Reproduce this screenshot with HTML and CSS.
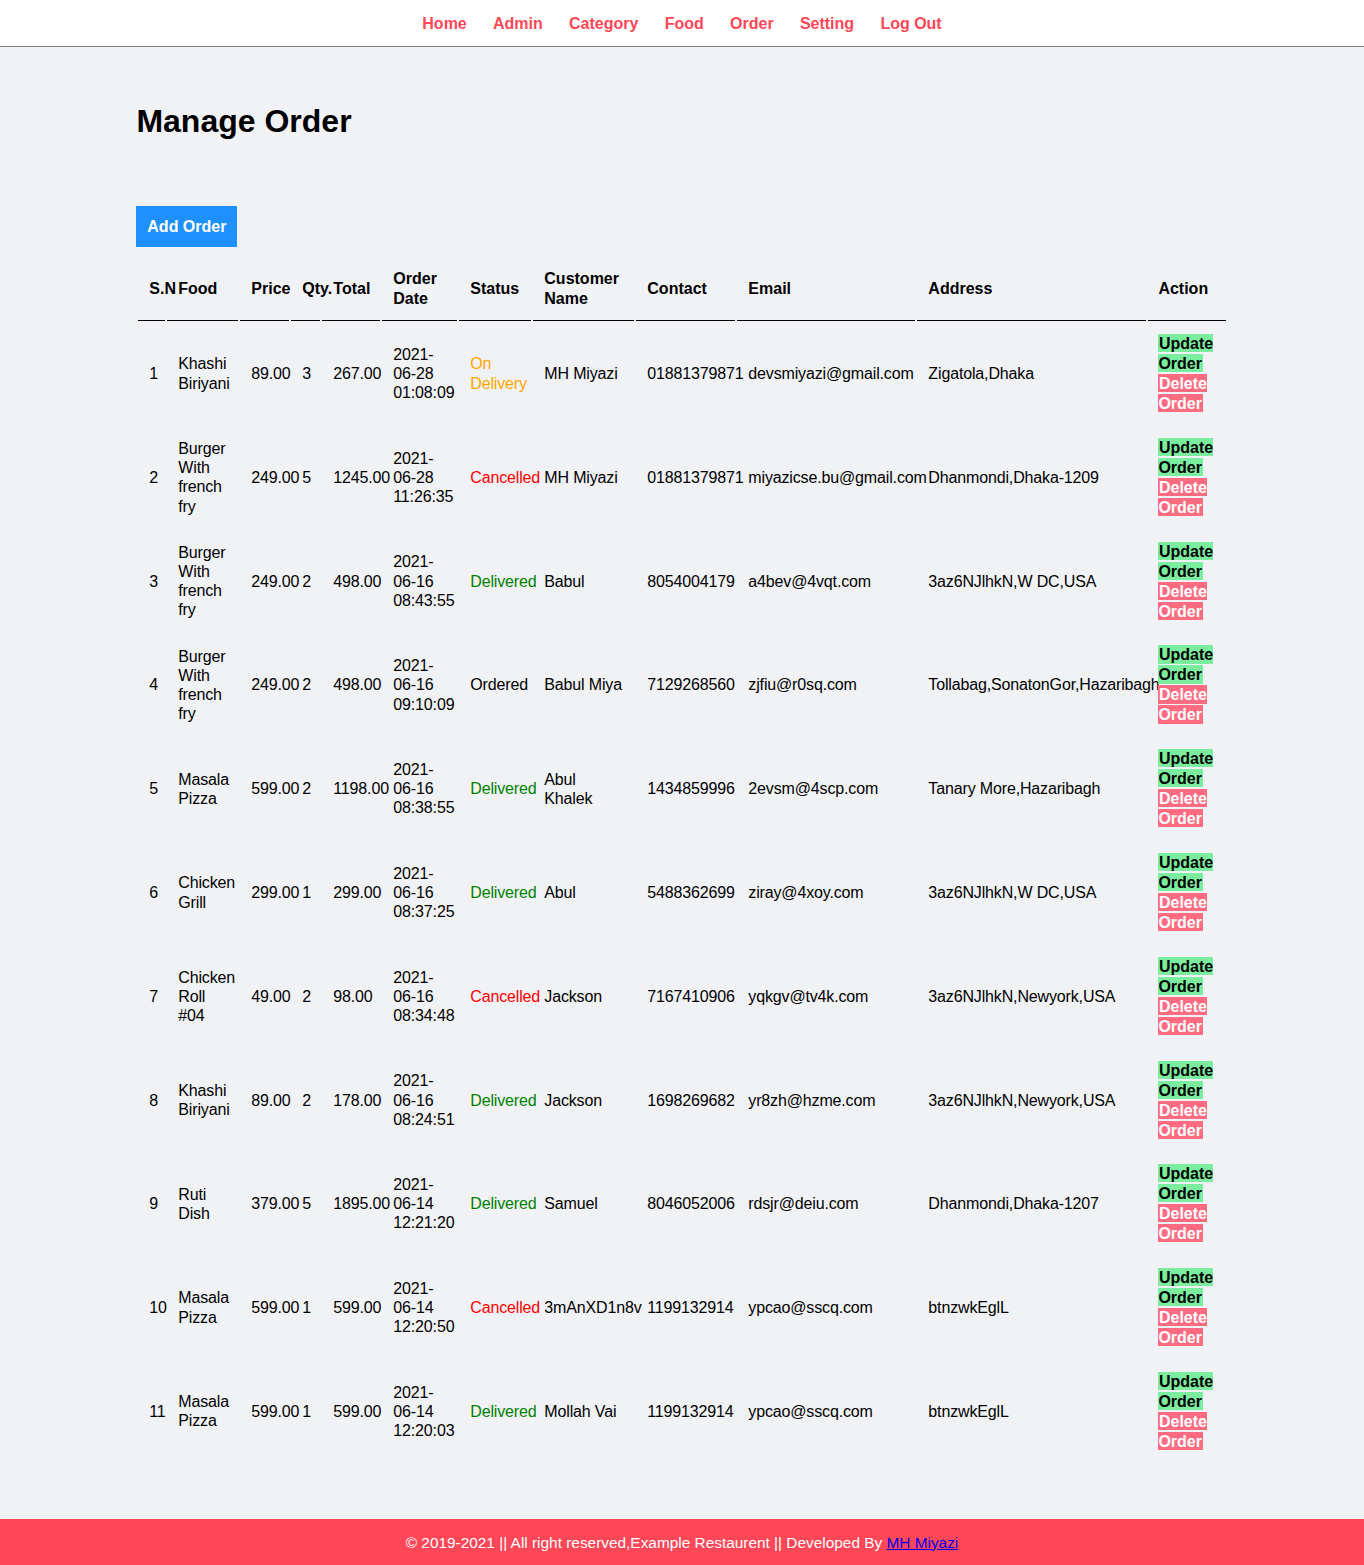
FILE: index.html
```html
<!DOCTYPE html>
<html lang="en">
<head>
<meta charset="utf-8">
<title>Manage Order</title>
<link rel="stylesheet" href="styles.css">
</head>
<body>
<div class="menu text-center">
  <div class="wrapper">
    <ul>
      <li><a href="#">Home</a></li>
      <li><a href="#">Admin</a></li>
      <li><a href="#">Category</a></li>
      <li><a href="#">Food</a></li>
      <li><a href="#">Order</a></li>
      <li><a href="#">Setting</a></li>
      <li><a href="#">Log Out</a></li>
    </ul>
  </div>
</div>

<div class="main-content">
  <div class="wrapper">
    <h1>Manage Order</h1>
    <div class="toolbar"><a href="#" class="btn-primary">Add Order</a></div>
    <table class="tbl-full">
      <colgroup>
        <col class="c-sn"><col class="c-food"><col class="c-price"><col class="c-qty"><col class="c-total"><col class="c-date"><col class="c-status"><col class="c-cust"><col class="c-contact"><col class="c-email"><col class="c-addr"><col class="c-act">
      </colgroup>
      <tr>
        <th>S.N</th><th>Food</th><th>Price</th><th>Qty.</th><th>Total</th><th>Order Date</th><th>Status</th><th>Customer Name</th><th>Contact</th><th>Email</th><th>Address</th><th>Action</th>
      </tr>
      <tr>
        <td>1</td><td>Khashi Biriyani</td><td>89.00</td><td>3</td><td>267.00</td><td>2021-06-28 01:08:09</td><td><span class="st-delivery">On Delivery</span></td><td>MH Miyazi</td><td>01881379871</td><td>devsmiyazi@gmail.com</td><td>Zigatola,Dhaka</td>
        <td class="act"><a href="#" class="btn-secondary">Update Order</a> <a href="#" class="btn-danger">Delete Order</a></td>
      </tr>
      <tr>
        <td>2</td><td>Burger With french fry</td><td>249.00</td><td>5</td><td>1245.00</td><td>2021-06-28 11:26:35</td><td><span class="st-cancelled">Cancelled</span></td><td>MH Miyazi</td><td>01881379871</td><td>miyazicse.bu@gmail.com</td><td>Dhanmondi,Dhaka-1209</td>
        <td class="act"><a href="#" class="btn-secondary">Update Order</a> <a href="#" class="btn-danger">Delete Order</a></td>
      </tr>
      <tr>
        <td>3</td><td>Burger With french fry</td><td>249.00</td><td>2</td><td>498.00</td><td>2021-06-16 08:43:55</td><td><span class="st-delivered">Delivered</span></td><td>Babul</td><td>8054004179</td><td>a4bev@4vqt.com</td><td>3az6NJlhkN,W DC,USA</td>
        <td class="act"><a href="#" class="btn-secondary">Update Order</a> <a href="#" class="btn-danger">Delete Order</a></td>
      </tr>
      <tr>
        <td>4</td><td>Burger With french fry</td><td>249.00</td><td>2</td><td>498.00</td><td>2021-06-16 09:10:09</td><td><span>Ordered</span></td><td>Babul Miya</td><td>7129268560</td><td>zjfiu@r0sq.com</td><td>Tollabag,SonatonGor,Hazaribagh</td>
        <td class="act"><a href="#" class="btn-secondary">Update Order</a> <a href="#" class="btn-danger">Delete Order</a></td>
      </tr>
      <tr>
        <td>5</td><td>Masala Pizza</td><td>599.00</td><td>2</td><td>1198.00</td><td>2021-06-16 08:38:55</td><td><span class="st-delivered">Delivered</span></td><td>Abul Khalek</td><td>1434859996</td><td>2evsm@4scp.com</td><td>Tanary More,Hazaribagh</td>
        <td class="act"><a href="#" class="btn-secondary">Update Order</a> <a href="#" class="btn-danger">Delete Order</a></td>
      </tr>
      <tr>
        <td>6</td><td>Chicken Grill</td><td>299.00</td><td>1</td><td>299.00</td><td>2021-06-16 08:37:25</td><td><span class="st-delivered">Delivered</span></td><td>Abul</td><td>5488362699</td><td>ziray@4xoy.com</td><td>3az6NJlhkN,W DC,USA</td>
        <td class="act"><a href="#" class="btn-secondary">Update Order</a> <a href="#" class="btn-danger">Delete Order</a></td>
      </tr>
      <tr>
        <td>7</td><td>Chicken Roll #04</td><td>49.00</td><td>2</td><td>98.00</td><td>2021-06-16 08:34:48</td><td><span class="st-cancelled">Cancelled</span></td><td>Jackson</td><td>7167410906</td><td>yqkgv@tv4k.com</td><td>3az6NJlhkN,Newyork,USA</td>
        <td class="act"><a href="#" class="btn-secondary">Update Order</a> <a href="#" class="btn-danger">Delete Order</a></td>
      </tr>
      <tr>
        <td>8</td><td>Khashi Biriyani</td><td>89.00</td><td>2</td><td>178.00</td><td>2021-06-16 08:24:51</td><td><span class="st-delivered">Delivered</span></td><td>Jackson</td><td>1698269682</td><td>yr8zh@hzme.com</td><td>3az6NJlhkN,Newyork,USA</td>
        <td class="act"><a href="#" class="btn-secondary">Update Order</a> <a href="#" class="btn-danger">Delete Order</a></td>
      </tr>
      <tr>
        <td>9</td><td>Ruti Dish</td><td>379.00</td><td>5</td><td>1895.00</td><td>2021-06-14 12:21:20</td><td><span class="st-delivered">Delivered</span></td><td>Samuel</td><td>8046052006</td><td>rdsjr@deiu.com</td><td>Dhanmondi,Dhaka-1207</td>
        <td class="act"><a href="#" class="btn-secondary">Update Order</a> <a href="#" class="btn-danger">Delete Order</a></td>
      </tr>
      <tr>
        <td>10</td><td>Masala Pizza</td><td>599.00</td><td>1</td><td>599.00</td><td>2021-06-14 12:20:50</td><td><span class="st-cancelled">Cancelled</span></td><td>3mAnXD1n8v</td><td>1199132914</td><td>ypcao@sscq.com</td><td>btnzwkEglL</td>
        <td class="act"><a href="#" class="btn-secondary">Update Order</a> <a href="#" class="btn-danger">Delete Order</a></td>
      </tr>
      <tr>
        <td>11</td><td>Masala Pizza</td><td>599.00</td><td>1</td><td>599.00</td><td>2021-06-14 12:20:03</td><td><span class="st-delivered">Delivered</span></td><td>Mollah Vai</td><td>1199132914</td><td>ypcao@sscq.com</td><td>btnzwkEglL</td>
        <td class="act"><a href="#" class="btn-secondary">Update Order</a> <a href="#" class="btn-danger">Delete Order</a></td>
      </tr>
    </table>
  </div>
</div>

<div class="footer">
  <div class="wrapper">
    <p class="text-center">&copy; 2019-2021 || All right reserved,Example Restaurent || Developed By <a href="#">MH Miyazi</a></p>
  </div>
</div>
</body>
</html>
```

FILE: styles.css
```css
* {
  margin: 0;
  padding: 0;
  font-family: "Liberation Sans", Arial, Helvetica, sans-serif;
}

body {
  font-size: 16px;
  line-height: 19.2px;
}

.text-center {
  text-align: center;
}

.wrapper {
  padding: 1%;
  width: 80%;
  margin: 0 auto;
}

/* Menu */
.menu {
  background: #ffffff;
  border-bottom: 1px solid grey;
}

.menu ul {
  list-style-type: none;
}

.menu ul li {
  display: inline;
  padding: 1%;
}

.menu ul li a {
  text-decoration: none;
  font-weight: bold;
  color: #ff4757;
}

/* Main content */
.main-content {
  background-color: #f1f2f6;
  padding: 3% 0;
}

.main-content h1 {
  font-size: 32px;
  line-height: 38.4px;
  font-weight: bold;
  color: #000;
}

.toolbar {
  margin-top: 65.6px;
}

.btn-primary {
  display: inline-block;
  background-color: #1e90ff;
  padding: 10.9px;
  color: #ffffff;
  text-decoration: none;
  font-weight: bold;
}

.btn-secondary {
  background-color: #7bed9f;
  padding: 1%;
  color: #000000;
  text-decoration: none;
  font-weight: bold;
}

.btn-danger {
  background-color: #ff6b81;
  padding: 1%;
  color: #ffffff;
  text-decoration: none;
  font-weight: bold;
}

.tbl-full {
  width: 100%;
  margin-top: 9px;
  table-layout: fixed;
}

.c-sn { width: 27px; }
.c-food { width: 71px; }
.c-price { width: 49px; }
.c-qty { width: 29px; }
.c-total { width: 58px; }
.c-date { width: 75px; }
.c-status { width: 72px; }
.c-cust { width: 101px; }
.c-contact { width: 99px; }
.c-email { width: 178px; }
.c-addr { width: 228px; }
.c-act { width: 78px; }

table tr th {
  border-bottom: 1px solid black;
  padding: 10.9px;
  text-align: left;
  line-height: 20px;
}

table tr td {
  padding: 10.9px;
  letter-spacing: -0.15px;
}

table tr td.act {
  line-height: 20px;
  letter-spacing: 0;
}

.st-delivery {
  color: orange;
}

.st-cancelled {
  color: red;
}

.st-delivered {
  color: green;
}

/* Footer */
.footer {
  background-color: #ff4757;
  color: #ffffff;
}

.footer p {
  font-size: 15.4px;
}

.footer a {
  color: #0000ee;
}
```
